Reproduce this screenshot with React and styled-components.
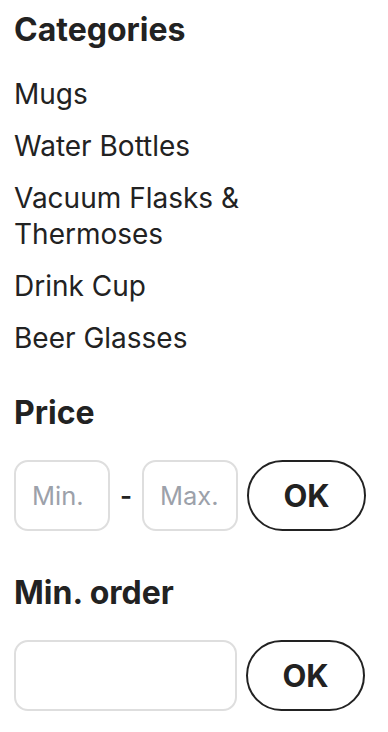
import React from "react";
import styled, { createGlobalStyle } from "styled-components";

const Global = createGlobalStyle`
  html, body { margin: 0; padding: 0; background: #fff; }
  body { font-family: Inter, "Noto Sans", sans-serif; color: #222; }
  * { box-sizing: border-box; }
`;

const Page = styled.div`
  display: flex;
  flex-direction: column;
  padding: 10px 14px 20px 14px;
`;

const Section = styled.section`
  display: flex;
  flex-direction: column;
  margin-top: ${(p) => p.$top || 0}px;
`;

const Heading = styled.h2`
  margin: 0;
  font-size: 32px;
  line-height: 40px;
  font-weight: 700;
  color: #222;
`;

const List = styled.ul`
  list-style: none;
  margin: 26px 0 0 0;
  padding: 0;
  display: flex;
  flex-direction: column;
  gap: 16px;
`;

const Item = styled.li`
  font-size: 28px;
  line-height: 36px;
  color: #222;
  max-width: 260px;
`;

const Row = styled.div`
  display: flex;
  align-items: center;
  margin-top: 27px;
  gap: 9px;
`;

const Field = styled.input`
  width: ${(p) => p.$w}px;
  height: 71px;
  border: 2px solid #dedede;
  border-radius: 14px;
  padding: 0 16px;
  font-family: Inter, sans-serif;
  font-size: 25.5px;
  color: #222;
  outline: none;
  &::placeholder { color: #9ca1aa; }
`;

const Dash = styled.span`
  font-size: 26px;
  font-weight: 600;
  color: #222;
  width: 14px;
  text-align: center;
`;

const OkButton = styled.button`
  width: 119px;
  height: 71px;
  border: 2px solid #222;
  border-radius: 36px;
  background: #fff;
  font-family: Inter, sans-serif;
  font-size: 31px;
  font-weight: 700;
  color: #222;
  cursor: pointer;
`;

export default function App() {
  const cats = ["Mugs", "Water Bottles", "Vacuum Flasks & Thermoses", "Drink Cup", "Beer Glasses"];
  return (
    <>
      <Global />
      <Page>
        <Section>
          <Heading>Categories</Heading>
          <List>
            {cats.map((c) => (
              <Item key={c}>{c}</Item>
            ))}
          </List>
        </Section>
        <Section $top={37}>
          <Heading>Price</Heading>
          <Row>
            <Field $w={96} placeholder="Min." />
            <Dash>-</Dash>
            <Field $w={96} placeholder="Max." />
            <OkButton>OK</OkButton>
          </Row>
        </Section>
        <Section $top={42}>
          <Heading>Min. order</Heading>
          <Row>
            <Field $w={223} />
            <OkButton>OK</OkButton>
          </Row>
        </Section>
      </Page>
    </>
  );
}
